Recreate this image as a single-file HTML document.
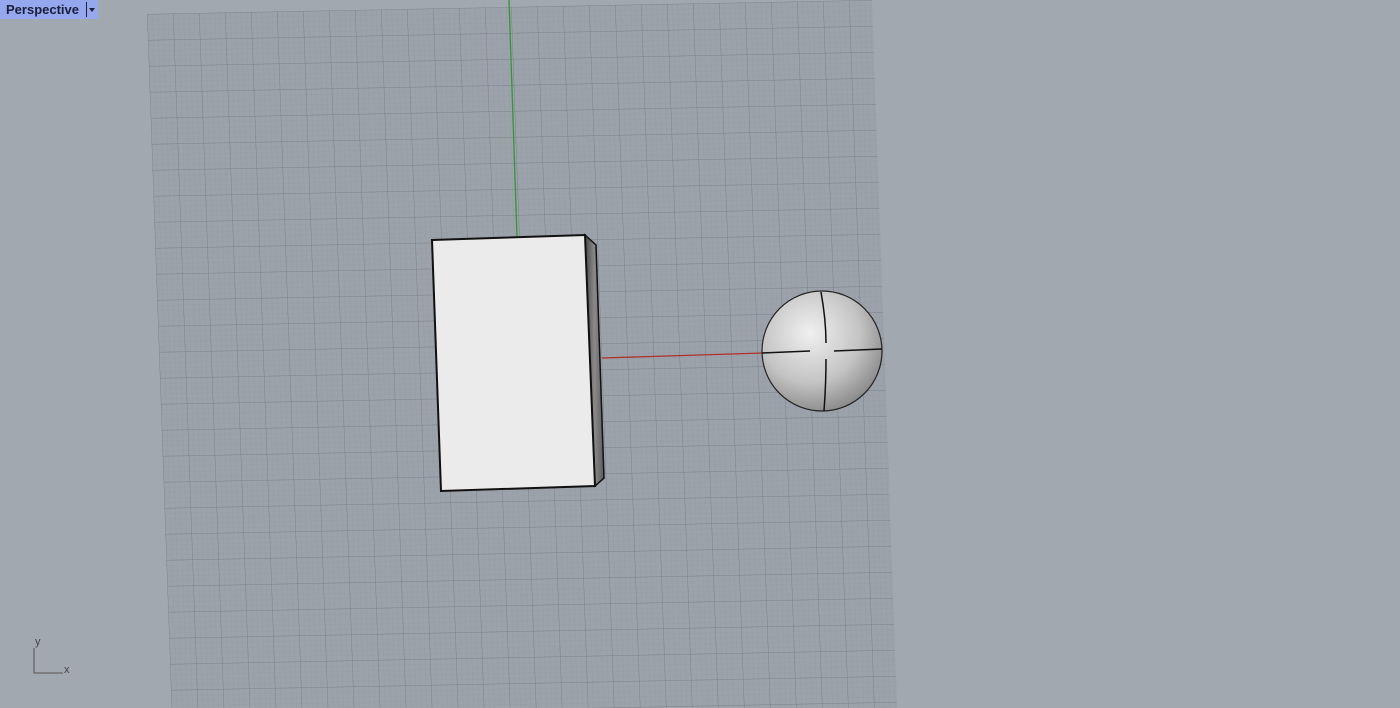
<!DOCTYPE html>
<html><head><meta charset="utf-8"><style>
html,body{margin:0;padding:0;width:1400px;height:708px;overflow:hidden;background:#a2a8b0}
svg{position:absolute;left:0;top:0;display:block}
.tab{position:absolute;left:0;top:0;width:98px;height:19px;background:#95a8ee;font:bold 13px "Liberation Sans",sans-serif;color:#1a1f3a}
.tab span{position:absolute;left:6px;top:2px}
</style></head><body>
<svg width="1400" height="708" viewBox="0 0 1400 708">
<defs>
<pattern id="minor" width="5.2" height="5.2" patternUnits="userSpaceOnUse">
<path d="M0 0H5.2M0 0V5.2" stroke="#939aa3" stroke-width="0.7" fill="none"/>
</pattern>
<pattern id="major" width="26" height="26" patternUnits="userSpaceOnUse">
<path d="M0 0H26M0 0V26" stroke="#7c828b" stroke-width="1" fill="none"/>
</pattern>
<radialGradient id="sph" cx="0.4" cy="0.35" r="0.75">
<stop offset="0" stop-color="#f0f0f0"/><stop offset="0.55" stop-color="#c4c4c4"/><stop offset="1" stop-color="#7a7a7a"/>
</radialGradient>
<linearGradient id="side" x1="0" x2="1"><stop offset="0" stop-color="#4a4a4a"/><stop offset="0.5" stop-color="#8a8a8a"/><stop offset="1" stop-color="#5a5a5a"/></linearGradient>
</defs>
<g transform="matrix(1,-0.0193,0.0355,1,147,14)">
<rect width="725" height="720" fill="#9ca2aa"/>
<rect width="725" height="720" fill="url(#minor)"/>
<rect width="725" height="720" fill="url(#major)"/>
</g>
<line x1="509" y1="0" x2="517" y2="237" stroke="#2f9a2f" stroke-width="1.3"/>
<line x1="602" y1="358" x2="764" y2="353" stroke="#b0302a" stroke-width="1.3"/>
<polygon points="585,235 596,245 604,478 595,486" fill="url(#side)" stroke="#111" stroke-width="1.5"/>
<polygon points="432,240 585,235 595,486 441,491" fill="#ebebeb" stroke="#111" stroke-width="2"/>
<circle cx="822" cy="351" r="60" fill="url(#sph)" stroke="#222" stroke-width="1.2"/>
<path d="M762 353 L810 351 M834 351 L882 349" stroke="#111" stroke-width="1.5"/>
<path d="M821 292 Q826 320 826 343 M826 359 Q826 385 824 411" stroke="#111" stroke-width="1.5" fill="none"/>
<path d="M34 648 V673 H63" stroke="#555" stroke-width="1" fill="none"/>
<text x="35" y="645" font-family="Liberation Sans,sans-serif" font-size="11" fill="#444">y</text>
<text x="64" y="673" font-family="Liberation Sans,sans-serif" font-size="11" fill="#444">x</text>
</svg>
<div class="tab"><span>Perspective</span>
<div style="position:absolute;left:86px;top:2px;width:1px;height:15px;background:#1a1f3a"></div>
<div style="position:absolute;left:89px;top:8px;width:0;height:0;border-left:3px solid transparent;border-right:3px solid transparent;border-top:4px solid #1a1f3a"></div>
</div>
</body></html>
